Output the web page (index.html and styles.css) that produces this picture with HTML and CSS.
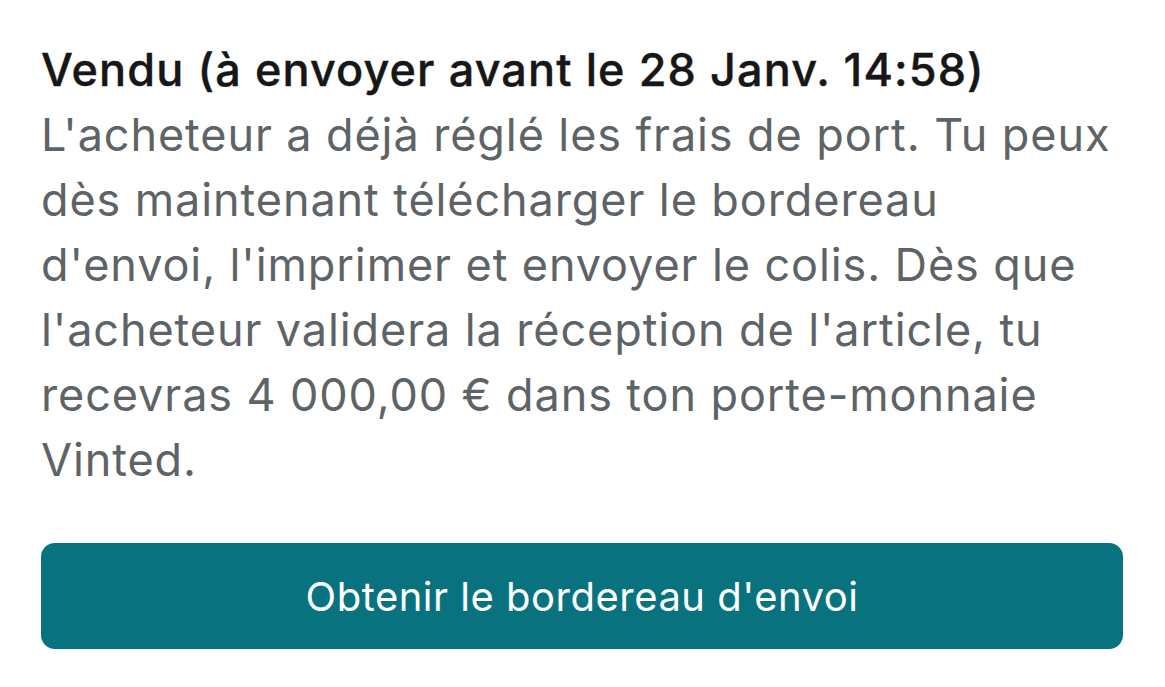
FILE: index.html
```html
<!DOCTYPE html>
<html lang="fr">
<head>
    <meta charset="UTF-8">
    <meta name="viewport" content="width=device-width, initial-scale=1.0">
    <title>Vendu</title>
    <link rel="stylesheet" href="styles.css">
</head>
<body>
    <div class="order-status">
        <h2 class="status-title">Vendu (à envoyer avant le 28 Janv. 14:58)</h2>
        <p class="status-text">L'acheteur a déjà réglé les frais de port. Tu peux dès maintenant télécharger le bordereau d'envoi, l'imprimer et envoyer le colis. Dès que l'acheteur validera la réception de l'article, tu recevras 4 000,00 € dans ton porte-monnaie Vinted.</p>
        <button class="label-button">Obtenir le bordereau d'envoi</button>
    </div>
</body>
</html>
```

FILE: styles.css
```css
body {
    margin: 0;
    background-color: #fff;
    font-family: Inter, "Noto Sans", sans-serif;
}

.order-status {
    padding: 37px 42px 0 41px;
    display: flex;
    flex-direction: column;
}

.status-title {
    margin: 0;
    font-size: 45px;
    font-weight: 500;
    line-height: 65px;
    letter-spacing: 1.1px;
    color: #171717;
    -webkit-text-stroke: 0.4px #171717;
}

.status-text {
    margin: 0;
    font-size: 45px;
    font-weight: 400;
    line-height: 65px;
    letter-spacing: 0.9px;
    color: #5d6366;
}

.label-button {
    margin-top: 51px;
    height: 106px;
    border: none;
    border-radius: 14px;
    background-color: #08737f;
    color: #fff;
    font-family: inherit;
    font-size: 40px;
    font-weight: 400;
    letter-spacing: 0.5px;
}
```
